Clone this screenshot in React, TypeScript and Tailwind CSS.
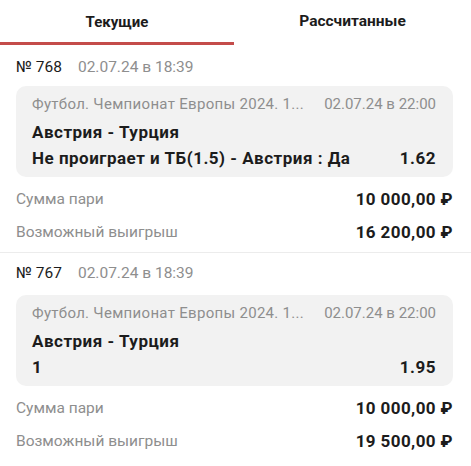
import React from "react";

type Bet = {
  num: string;
  placed: string;
  league: string;
  start: string;
  match: string;
  outcome: string;
  coef: string;
  stake: string;
  win: string;
};

const bets: Bet[] = [
  {
    num: "№ 768",
    placed: "02.07.24 в 18:39",
    league: "Футбол. Чемпионат Европы 2024. 1...",
    start: "02.07.24 в 22:00",
    match: "Австрия - Турция",
    outcome: "Не проиграет и ТБ(1.5) - Австрия : Да",
    coef: "1.62",
    stake: "10 000,00 ₽",
    win: "16 200,00 ₽",
  },
  {
    num: "№ 767",
    placed: "02.07.24 в 18:39",
    league: "Футбол. Чемпионат Европы 2024. 1...",
    start: "02.07.24 в 22:00",
    match: "Австрия - Турция",
    outcome: "1",
    coef: "1.95",
    stake: "10 000,00 ₽",
    win: "19 500,00 ₽",
  },
];

function BetBlock({ bet, first }: { bet: Bet; first: boolean }) {
  return (
    <div className={first ? "pt-[11px] pb-[3px] border-b border-[#ececec]" : "pt-[9px] pb-[3px]"}>
      <div className="px-4 flex items-center gap-4 h-[24px] text-[15.5px] whitespace-nowrap">
        <span className="text-[#1c1c1c]">{bet.num}</span>
        <span className="text-[#8e8e8e]">{bet.placed}</span>
      </div>
      <div
        className={`ml-4 mr-[18px] ${first ? "mt-[6px]" : "mt-[9px]"} rounded-[10px] bg-[#f2f2f2] pl-4 pr-[17px] pt-[8px] pb-[5px]`}
      >
        <div className="flex justify-between gap-4 text-[15px] leading-[20px] text-[#8e8e8e] whitespace-nowrap">
          <span className="tracking-[0.3px]">{bet.league}</span>
          <span>{bet.start}</span>
        </div>
        <div className="mt-[6px] text-[17px] leading-[24px] font-bold tracking-[0.5px] text-[#1c1c1c] whitespace-nowrap">
          {bet.match}
        </div>
        <div className="flex justify-between text-[17px] leading-[28px] font-bold tracking-[0.5px] text-[#1c1c1c] whitespace-nowrap">
          <span>{bet.outcome}</span>
          <span>{bet.coef}</span>
        </div>
      </div>
      <div className="mt-[6px] pl-4 pr-[18px] whitespace-nowrap">
        <div className="flex justify-between items-center h-[33px]">
          <span className="text-[15.5px] text-[#8e8e8e]">Сумма пари</span>
          <span className="text-[17px] font-bold tracking-[0.4px] text-[#1c1c1c]">{bet.stake}</span>
        </div>
        <div className="flex justify-between items-center h-[33px]">
          <span className="text-[15.5px] text-[#8e8e8e]">Возможный выигрыш</span>
          <span className="text-[17px] font-bold tracking-[0.4px] text-[#1c1c1c]">{bet.win}</span>
        </div>
      </div>
    </div>
  );
}

export default function App() {
  return (
    <div
      className="w-[471px] h-[466px] bg-white overflow-hidden"
      style={{ fontFamily: "Roboto, 'Noto Sans', sans-serif" }}
    >
      <div className="flex h-[45px]">
        <div className="w-[234px] flex items-center justify-center border-b-[3px] border-[#c44c4a] pt-[2px]">
          <span className="text-[15px] font-bold text-[#1c1c1c]">Текущие</span>
        </div>
        <div className="flex-1 flex items-center justify-center pb-[1px]">
          <span className="text-[15.5px] font-bold text-[#1c1c1c]">Рассчитанные</span>
        </div>
      </div>
      {bets.map((b, i) => (
        <BetBlock key={b.num} bet={b} first={i === 0} />
      ))}
    </div>
  );
}
